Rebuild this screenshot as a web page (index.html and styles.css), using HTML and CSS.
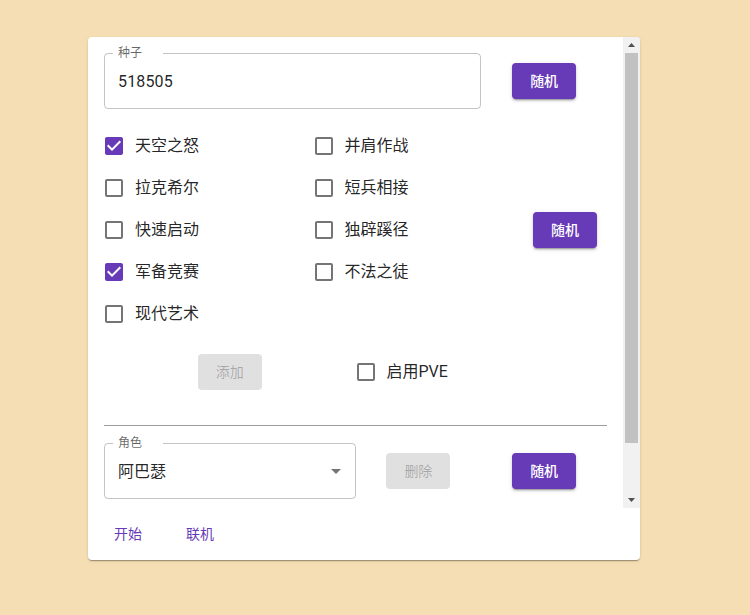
FILE: index.html
```html
<!DOCTYPE html>
<html lang="zh">
<head>
<meta charset="utf-8">
<link rel="stylesheet" href="styles.css">
</head>
<body>
<div class="page">
  <div class="card">
    <div class="scroller">
      <div class="viewport">
      <div class="content">
        <div class="seed-row">
          <div class="field">
            <span class="field-label">种子</span>
            <div class="field-value num">518505</div>
          </div>
          <div class="cell-center"><button class="btn primary">随机</button></div>
        </div>

        <div class="mods">
          <div class="mod-cols">
            <div class="mod-col">
              <label class="check"><span class="box"><svg viewBox="0 0 24 24"><path class="on" d="M19 3H5c-1.11 0-2 .9-2 2v14c0 1.1.89 2 2 2h14c1.11 0 2-.9 2-2V5c0-1.1-.89-2-2-2zm-9 14l-5-5 1.41-1.41L10 14.17l7.59-7.59L19 8l-9 9z"/></svg></span><span class="lbl">天空之怒</span></label>
              <label class="check"><span class="box"><svg viewBox="0 0 24 24"><path class="off" d="M19 5v14H5V5h14m0-2H5c-1.1 0-2 .9-2 2v14c0 1.1.9 2 2 2h14c1.1 0 2-.9 2-2V5c0-1.1-.9-2-2-2z"/></svg></span><span class="lbl">拉克希尔</span></label>
              <label class="check"><span class="box"><svg viewBox="0 0 24 24"><path class="off" d="M19 5v14H5V5h14m0-2H5c-1.1 0-2 .9-2 2v14c0 1.1.9 2 2 2h14c1.1 0 2-.9 2-2V5c0-1.1-.9-2-2-2z"/></svg></span><span class="lbl">快速启动</span></label>
              <label class="check"><span class="box"><svg viewBox="0 0 24 24"><path class="on" d="M19 3H5c-1.11 0-2 .9-2 2v14c0 1.1.89 2 2 2h14c1.11 0 2-.9 2-2V5c0-1.1-.89-2-2-2zm-9 14l-5-5 1.41-1.41L10 14.17l7.59-7.59L19 8l-9 9z"/></svg></span><span class="lbl">军备竞赛</span></label>
              <label class="check"><span class="box"><svg viewBox="0 0 24 24"><path class="off" d="M19 5v14H5V5h14m0-2H5c-1.1 0-2 .9-2 2v14c0 1.1.9 2 2 2h14c1.1 0 2-.9 2-2V5c0-1.1-.9-2-2-2z"/></svg></span><span class="lbl">现代艺术</span></label>
            </div>
            <div class="mod-col">
              <label class="check"><span class="box"><svg viewBox="0 0 24 24"><path class="off" d="M19 5v14H5V5h14m0-2H5c-1.1 0-2 .9-2 2v14c0 1.1.9 2 2 2h14c1.1 0 2-.9 2-2V5c0-1.1-.9-2-2-2z"/></svg></span><span class="lbl">并肩作战</span></label>
              <label class="check"><span class="box"><svg viewBox="0 0 24 24"><path class="off" d="M19 5v14H5V5h14m0-2H5c-1.1 0-2 .9-2 2v14c0 1.1.9 2 2 2h14c1.1 0 2-.9 2-2V5c0-1.1-.9-2-2-2z"/></svg></span><span class="lbl">短兵相接</span></label>
              <label class="check"><span class="box"><svg viewBox="0 0 24 24"><path class="off" d="M19 5v14H5V5h14m0-2H5c-1.1 0-2 .9-2 2v14c0 1.1.9 2 2 2h14c1.1 0 2-.9 2-2V5c0-1.1-.9-2-2-2z"/></svg></span><span class="lbl">独辟蹊径</span></label>
              <label class="check"><span class="box"><svg viewBox="0 0 24 24"><path class="off" d="M19 5v14H5V5h14m0-2H5c-1.1 0-2 .9-2 2v14c0 1.1.9 2 2 2h14c1.1 0 2-.9 2-2V5c0-1.1-.9-2-2-2z"/></svg></span><span class="lbl">不法之徒</span></label>
            </div>
          </div>
          <div class="cell-center"><button class="btn primary">随机</button></div>
        </div>

        <div class="add-row">
          <div class="cell-center"><button class="btn disabled">添加</button></div>
          <div class="cell-left">
            <label class="check"><span class="box"><svg viewBox="0 0 24 24"><path class="off" d="M19 5v14H5V5h14m0-2H5c-1.1 0-2 .9-2 2v14c0 1.1.9 2 2 2h14c1.1 0 2-.9 2-2V5c0-1.1-.9-2-2-2z"/></svg></span><span class="lbl">启用PVE</span></label>
          </div>
        </div>

        <div class="divider"></div>

        <div class="role-row">
          <div class="field">
            <span class="field-label">角色</span>
            <div class="field-value">阿巴瑟</div>
            <svg class="arrow" viewBox="0 0 24 24"><path d="M7 10l5 5 5-5z"/></svg>
          </div>
          <div class="cell-center"><button class="btn disabled">删除</button></div>
          <div class="cell-center"><button class="btn primary">随机</button></div>
        </div>
      </div>
      </div>
      <div class="scrollbar">
        <div class="sb-btn"><svg viewBox="0 0 17 16"><path d="M5 10h7L8.5 6z"/></svg></div>
        <div class="sb-track"><div class="sb-thumb"></div></div>
        <div class="sb-btn"><svg viewBox="0 0 17 16"><path d="M5 6h7L8.5 10z"/></svg></div>
      </div>
    </div>
    <div class="actions">
      <button class="btn text">开始</button>
      <button class="btn text">联机</button>
    </div>
  </div>
</div>
</body>
</html>
```

FILE: styles.css
```css
html, body {
  margin: 0;
  padding: 0;
  background: #f5deb3;
  font-family: Roboto, "Noto Sans CJK SC", sans-serif;
  color: rgba(0, 0, 0, 0.87);
}

.page {
  padding: 37px 0 0 88px;
  height: 615px;
  box-sizing: border-box;
}

.card {
  width: 552px;
  background: #fff;
  border-radius: 4px;
  box-shadow: 0px 2px 1px -1px rgba(0,0,0,0.2), 0px 1px 1px 0px rgba(0,0,0,0.14), 0px 1px 3px 0px rgba(0,0,0,0.12);
  overflow: hidden;
}

.scroller {
  height: 471px;
  display: flex;
}

.viewport {
  flex: 1;
  min-width: 0;
  overflow: hidden;
}

.scrollbar {
  width: 17px;
  flex: none;
  background: #f1f1f1;
  display: flex;
  flex-direction: column;
}

.sb-btn {
  height: 16px;
  flex: none;
}

.sb-btn svg {
  display: block;
  width: 17px;
  height: 16px;
  fill: #505050;
}

.sb-track {
  flex: 1;
  padding: 0 2px;
}

.sb-thumb {
  height: 390px;
  background: #c1c1c1;
}

.content {
  padding: 16px 16px 68px 16px;
}

.seed-row {
  display: grid;
  grid-template-columns: 3fr 1fr;
  height: 56px;
}

.cell-center {
  display: flex;
  align-items: center;
  justify-content: center;
}

.cell-left {
  display: flex;
  align-items: center;
}

.field {
  position: relative;
  height: 56px;
  box-sizing: border-box;
  border: 1px solid rgba(0, 0, 0, 0.23);
  border-radius: 4px;
  display: flex;
  align-items: center;
  padding: 0 13px;
}

.field-label {
  position: absolute;
  left: 8px;
  top: -8px;
  padding: 0 21px 0 5px;
  background: #fff;
  font-size: 12px;
  line-height: 14px;
  color: rgba(0, 0, 0, 0.6);
}

.field-value {
  font-size: 16px;
  line-height: 19px;
  color: rgba(0, 0, 0, 0.87);
}

.num {
  letter-spacing: 0.15px;
}

.arrow {
  position: absolute;
  right: 7px;
  top: 15px;
  width: 24px;
  height: 24px;
  fill: rgba(0, 0, 0, 0.54);
}

.btn {
  font-family: Roboto, "Noto Sans CJK SC", sans-serif;
  font-size: 14px;
  font-weight: 500;
  line-height: 24px;
  min-width: 64px;
  height: 36px;
  padding: 6px 16px;
  box-sizing: border-box;
  border: none;
  border-radius: 4px;
  cursor: pointer;
}

.btn.primary {
  background: #673ab7;
  color: #fff;
  box-shadow: 0px 3px 1px -2px rgba(0,0,0,0.2), 0px 2px 2px 0px rgba(0,0,0,0.14), 0px 1px 5px 0px rgba(0,0,0,0.12);
}

.btn.disabled {
  background: rgba(0, 0, 0, 0.12);
  color: rgba(0, 0, 0, 0.26);
  font-weight: 400;
}

.btn.text {
  background: transparent;
  color: #673ab7;
  padding: 6px 8px;
  font-weight: 400;
}

.mods {
  margin-top: 16px;
  display: grid;
  grid-template-columns: 5fr 1fr;
}

.mod-cols {
  display: grid;
  grid-template-columns: 1fr 1fr;
}

.mod-col {
  display: flex;
  flex-direction: column;
}

.check {
  display: flex;
  align-items: center;
  height: 42px;
  margin-left: -11px;
}

.box {
  width: 42px;
  height: 42px;
  padding: 9px;
  box-sizing: border-box;
}

.box svg {
  width: 24px;
  height: 24px;
  display: block;
}

.box .on {
  fill: #673ab7;
}

.box .off {
  fill: rgba(0, 0, 0, 0.54);
}

.lbl {
  font-size: 16px;
  line-height: 20px;
  color: rgba(0, 0, 0, 0.87);
}

.add-row {
  margin-top: 16px;
  display: grid;
  grid-template-columns: 1fr 1fr;
  height: 42px;
}

.divider {
  margin-top: 32px;
  height: 1px;
  background: rgba(0, 0, 0, 0.38);
}

.role-row {
  margin-top: 17px;
  display: grid;
  grid-template-columns: 2fr 1fr 1fr;
  height: 56px;
}

.actions {
  display: flex;
  gap: 8px;
  padding: 8px;
}
```
